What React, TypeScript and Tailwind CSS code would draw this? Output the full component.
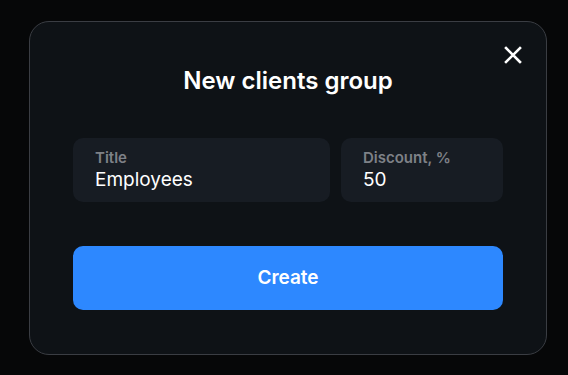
import React from "react";

export default function App() {
  return (
    <div
      className="w-[568px] h-[375px] bg-[#060708] pt-[21px] pl-[29px]"
      style={{ fontFamily: "Inter, 'Noto Sans', sans-serif" }}
    >
      <div className="relative w-[518px] h-[334px] rounded-[20px] border border-[#3a3d43] bg-[#0e1216] px-[43px] pt-[43px]">
        <button className="absolute right-[22px] top-[22px] w-[22px] h-[22px] flex items-center justify-center text-white">
          <svg width="20" height="20" viewBox="0 0 20 20" fill="none" stroke="white" strokeWidth="2.6" strokeLinecap="square">
            <path d="M3 3 L17 17 M17 3 L3 17" />
          </svg>
        </button>
        <h1 className="text-center text-white text-[24px] font-semibold leading-[32px]">New clients group</h1>
        <div className="mt-[41px] flex gap-[11px]">
          <div className="w-[257px] h-[64px] rounded-[10px] bg-[#171c23] pl-[22px] pt-[10px]">
            <div className="text-[15px] font-semibold text-[#7e8187] leading-[20px]">Title</div>
            <div className="text-[19px] text-white leading-[24px]">Employees</div>
          </div>
          <div className="flex-1 h-[64px] rounded-[10px] bg-[#171c23] pl-[22px] pt-[10px]">
            <div className="text-[15px] font-semibold text-[#7e8187] leading-[20px]">Discount, %</div>
            <div className="text-[19px] text-white leading-[24px]">50</div>
          </div>
        </div>
        <button className="mt-[44px] w-full h-[64px] rounded-[10px] bg-[#2d88ff] text-white text-[19px] font-semibold">
          Create
        </button>
      </div>
    </div>
  );
}
